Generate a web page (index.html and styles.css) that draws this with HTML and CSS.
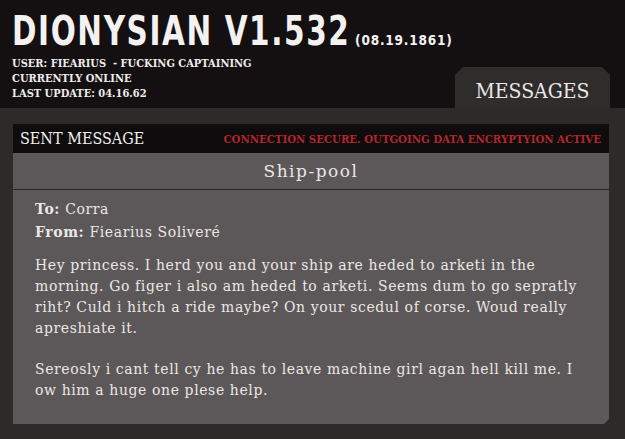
FILE: index.html
```html
<!DOCTYPE html>
<html lang="en">

<head>
    <meta charset="UTF-8">
    <title>Dionysian V1.532 - Messages</title>
    <link rel="stylesheet" href="styles.css">
</head>

<body>
<div id="top-bar">
    <div id="status">
        <div id="title"><span id="title-text">DIONYSIAN V1.532</span><span id="build-date">(08.19.1861)</span></div>
        <div class="status-line">USER: FIEARIUS &nbsp;- FUCKING CAPTAINING</div>
        <div class="status-line">CURRENTLY ONLINE</div>
        <div class="status-line">LAST UPDATE: 04.16.62</div>
    </div>
    <div id="messages-tab">MESSAGES</div>
</div>

<div id="panel">
    <div id="panel-header">
        <span id="panel-title">SENT MESSAGE</span>
        <span id="secure-note">CONNECTION SECURE. OUTGOING DATA ENCRYPTYION ACTIVE</span>
    </div>
    <div id="message-card">
        <div id="subject">Ship-pool</div>
        <div id="message-body">
            <div class="meta-line"><b>To:</b> Corra</div>
            <div class="meta-line"><b>From:</b> Fiearius Soliveré</div>
            <p>Hey princess. I herd you and your ship are heded to arketi in the morning. Go figer i also am heded to arketi. Seems dum to go sepratly riht? Culd i hitch a ride maybe? On your scedul of corse. Woud really apreshiate it.</p>
            <p>Sereosly i cant tell cy he has to leave machine girl agan hell kill me. I ow him a huge one plese help.</p>
        </div>
    </div>
</div>
</body>

</html>
```

FILE: styles.css
```css
body {
    margin: 0;
    width: 625px;
    height: 439px;
    overflow: hidden;
    background-color: #2e2a2a;
    font-family: "DejaVu Serif", "Liberation Serif", serif;
    color: #ebe7e4;
}

#top-bar {
    height: 108px;
    background-color: #141011;
    display: flex;
    justify-content: space-between;
    align-items: flex-end;
}

#status {
    align-self: flex-start;
    padding: 12px 0 0 12px;
    white-space: nowrap;
}

#title {
    display: flex;
    align-items: baseline;
    margin-bottom: -3px;
    font-family: "DejaVu Sans Condensed", "DejaVu Sans", sans-serif;
    font-weight: bold;
    line-height: 38px;
    color: #f4f2f0;
}

/* logo type is narrower than any installed face */
#title-text {
    display: inline-block;
    font-size: 41px;
    letter-spacing: 2px;
    transform: scaleX(0.8);
    transform-origin: left;
    margin-right: -80px;
}

#build-date {
    font-size: 13.5px;
    letter-spacing: 0.8px;
}

.status-line {
    font-family: "DejaVu Serif Condensed", "DejaVu Serif", serif;
    font-weight: bold;
    font-size: 11px;
    line-height: 15px;
    color: #efeceb;
}

#messages-tab {
    width: 155px;
    height: 41px;
    margin-right: 15px;
    box-sizing: border-box;
    padding-top: 12px;
    text-align: center;
    font-family: "DejaVu Serif Condensed", "DejaVu Serif", serif;
    font-size: 21px;
    background-color: #2f2c2c;
    clip-path: polygon(8px 0, calc(100% - 8px) 0, 100% 8px, 100% 100%, 0 100%, 0 8px);
}

#panel {
    padding: 16px 16px 15px 13px;
}

#panel-header {
    height: 29px;
    background-color: #0e0c0c;
    display: flex;
    justify-content: space-between;
    align-items: center;
    padding: 0 8px 0 7px;
}

#panel-title {
    font-family: "DejaVu Serif Condensed", "DejaVu Serif", serif;
    font-size: 16px;
    color: #f2efee;
}

#secure-note {
    font-family: "DejaVu Serif Condensed", "DejaVu Serif", serif;
    font-weight: bold;
    font-size: 11.3px;
    color: #b3262b;
}

#message-card {
    height: 271px;
    background-color: #5c5758;
    clip-path: polygon(0 0, 100% 0, 100% calc(100% - 5px), calc(100% - 5px) 100%, 0 100%);
}

#subject {
    height: 36px;
    line-height: 36px;
    text-align: center;
    font-size: 17px;
    letter-spacing: 1.5px;
    border-bottom: 1px solid #2b2727;
}

#message-body {
    padding: 8px 22px 0 22px;
    font-size: 14px;
    letter-spacing: 0.6px;
}

.meta-line {
    line-height: 23px;
}

#message-body p {
    margin: 11px 0 20px 0;
    line-height: 21px;
}
```
